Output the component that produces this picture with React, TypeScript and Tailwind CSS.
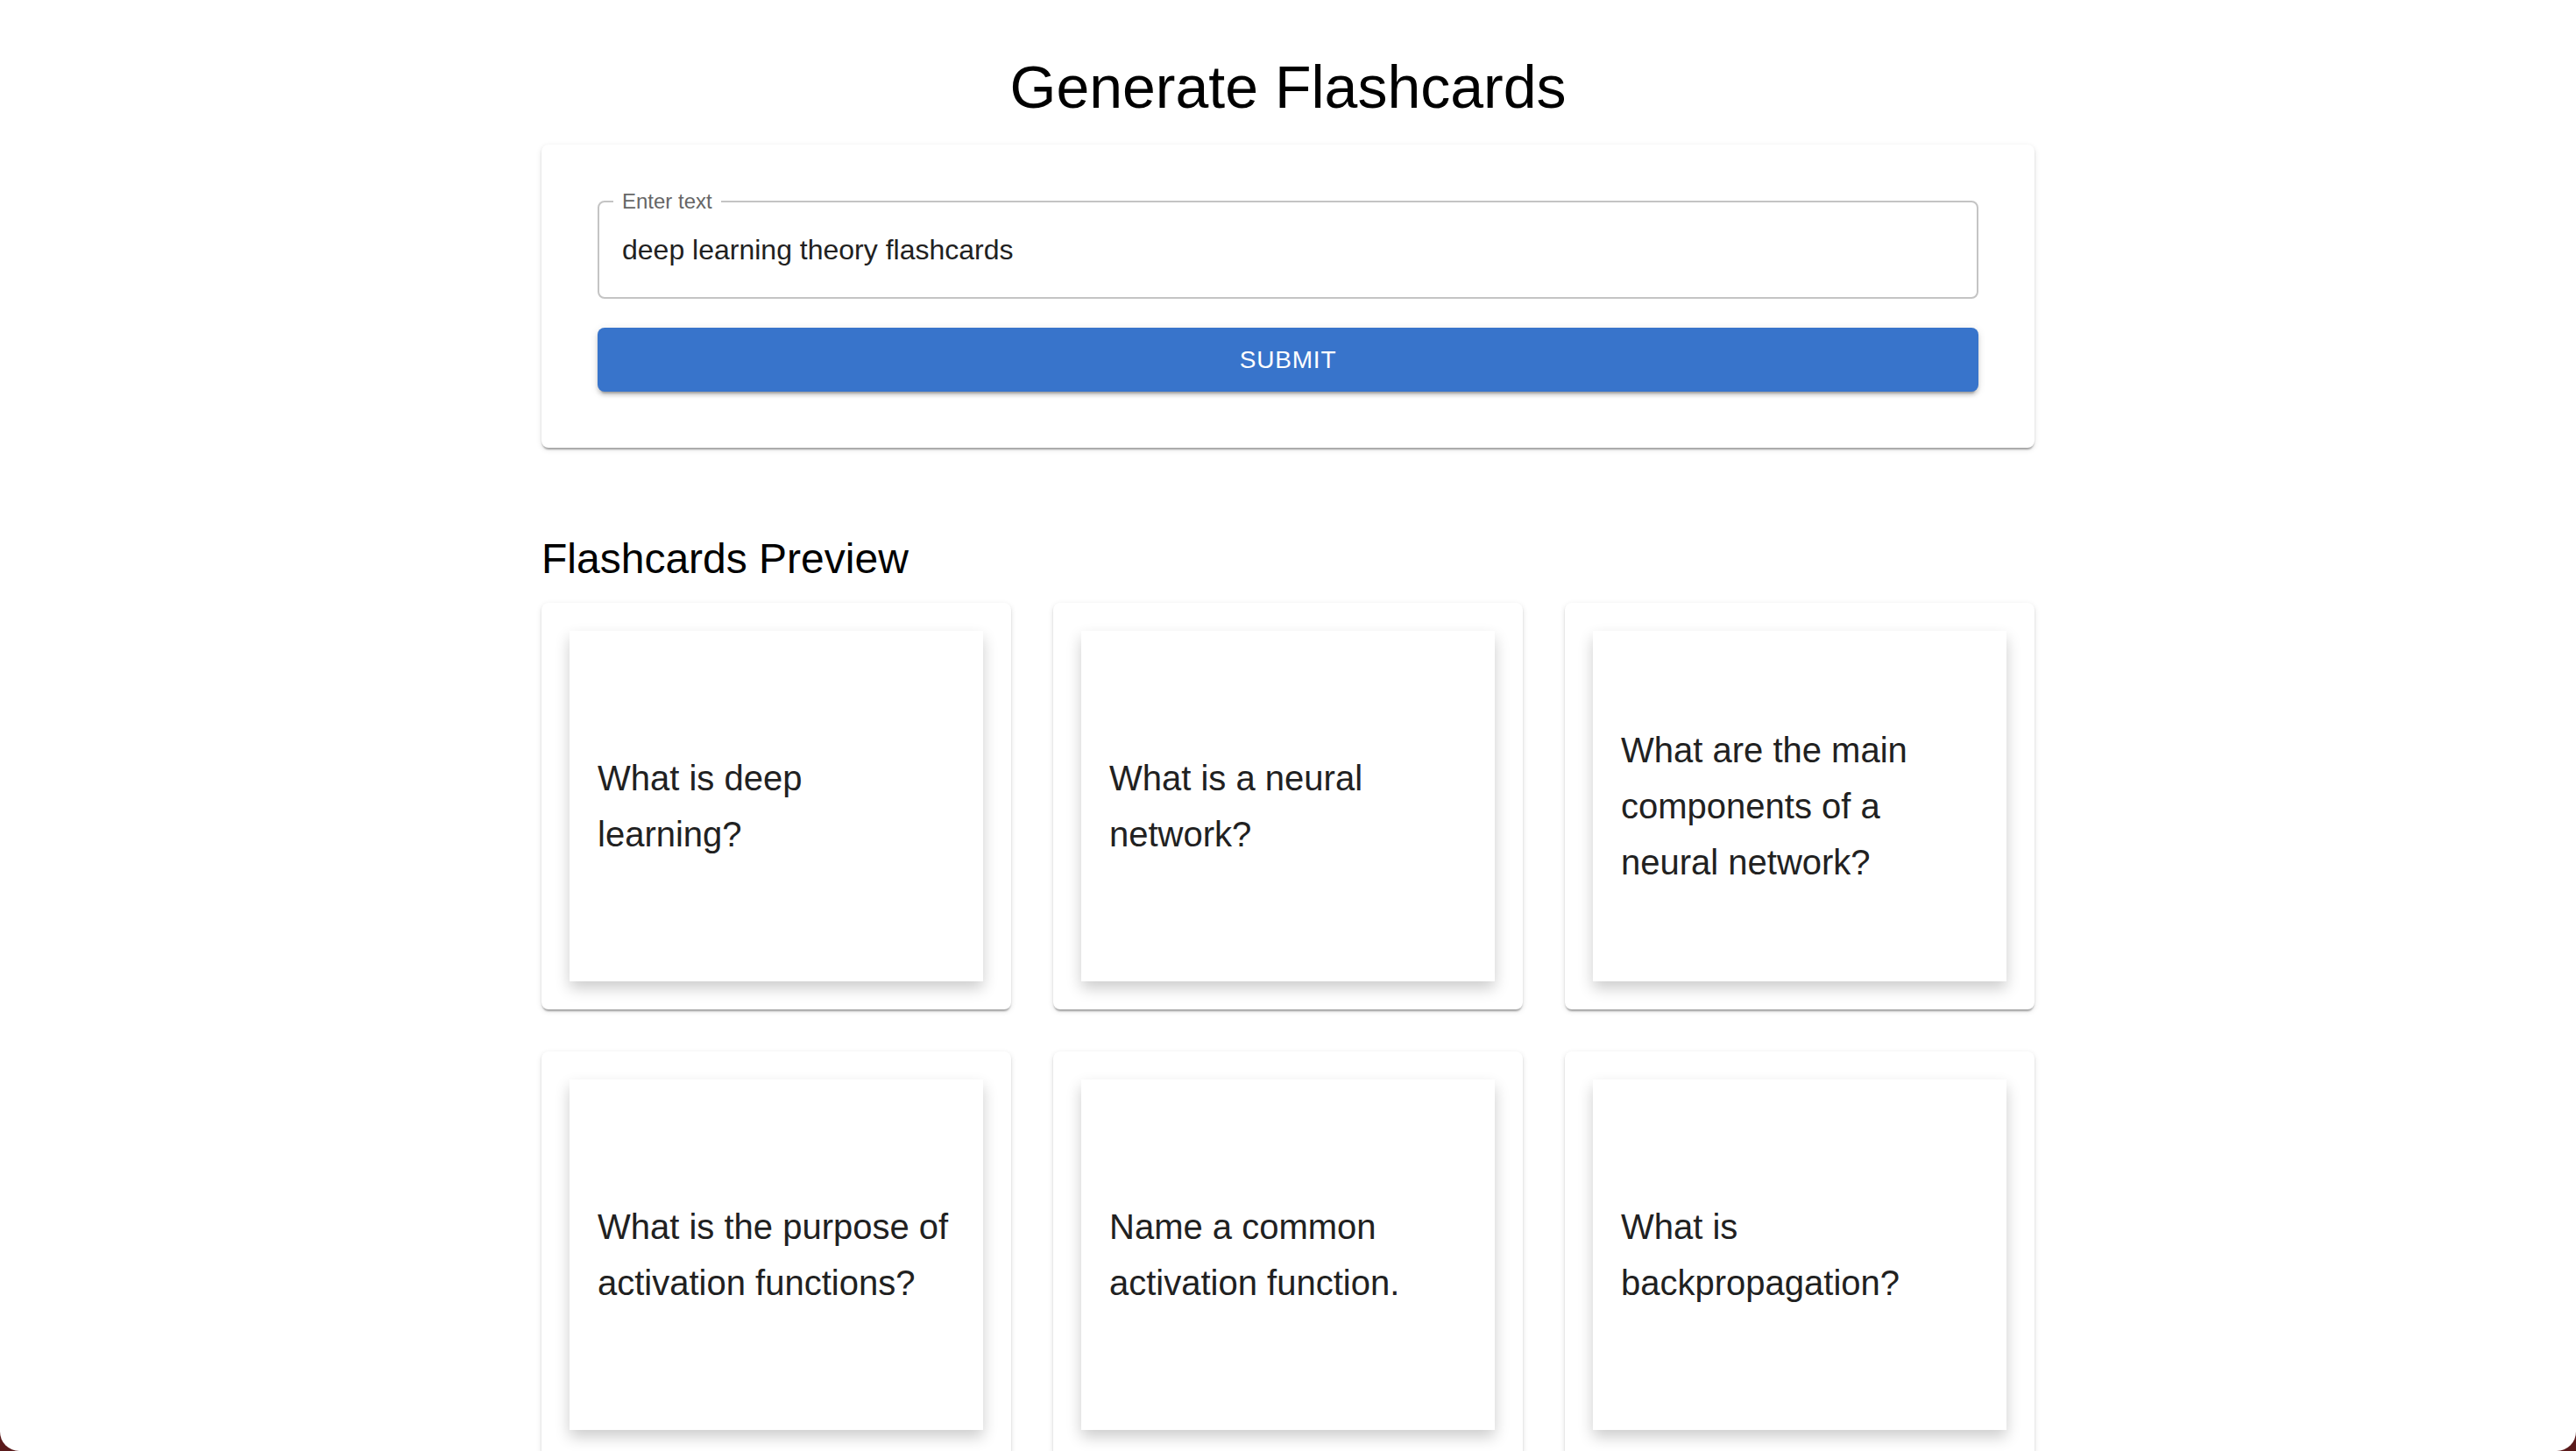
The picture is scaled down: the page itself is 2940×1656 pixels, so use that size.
import React from "react";

const cards = [
  "What is deep learning?",
  "What is a neural network?",
  "What are the main components of a neural network?",
  "What is the purpose of activation functions?",
  "Name a common activation function.",
  "What is backpropagation?",
];

export default function App() {
  return (
    <div className="h-screen w-full overflow-hidden bg-[#5a1a1b]">
      <div
        className="h-full w-full overflow-hidden rounded-b-[22px] bg-white pt-[57px]"
        style={{ fontFamily: "Helvetica, 'Liberation Sans', Arial, sans-serif" }}
      >
        <div className="mx-auto w-[1704px]">
          <h1 className="mb-[24px] text-center text-[68px] font-normal leading-[84px] text-black">
            Generate Flashcards
          </h1>

          <div className="rounded-[8px] bg-white p-[64px] shadow-[0_4px_2px_-2px_rgba(0,0,0,0.2),0_2px_2px_0_rgba(0,0,0,0.14),0_2px_6px_0_rgba(0,0,0,0.12)]">
            <div className="relative flex h-[112px] items-center rounded-[8px] border-2 border-[#c4c4c4] pl-[26px]">
              <span className="absolute left-[16px] top-[-13px] bg-white px-[10px] text-[24px] leading-[24px] text-[#666666]">
                Enter text
              </span>
              <span className="text-[32px] leading-[46px] text-[#212121]">
                deep learning theory flashcards
              </span>
            </div>
            <button
              type="button"
              className="mt-[33px] flex h-[73px] w-full items-center justify-center rounded-[8px] bg-[#3874cb] text-[28px] font-medium uppercase tracking-[0.8px] text-white shadow-[0_6px_2px_-4px_rgba(0,0,0,0.2),0_4px_4px_0_rgba(0,0,0,0.14),0_2px_10px_0_rgba(0,0,0,0.12)]"
            >
              Submit
            </button>
          </div>

          <h2 className="mb-[18px] mt-[95px] text-[48px] font-normal leading-[64px] text-black">
            Flashcards Preview
          </h2>

          <div className="grid grid-cols-3 gap-[48px]">
            {cards.map((q) => (
              <div
                key={q}
                className="rounded-[8px] bg-white p-[32px] shadow-[0_4px_2px_-2px_rgba(0,0,0,0.2),0_2px_2px_0_rgba(0,0,0,0.14),0_2px_6px_0_rgba(0,0,0,0.12)]"
              >
                <div className="flex h-[400px] flex-col justify-center bg-white px-[32px] shadow-[0_8px_16px_0_rgba(0,0,0,0.2)]">
                  <p className="text-[40px] leading-[64px] text-[#212121]">{q}</p>
                </div>
              </div>
            ))}
          </div>
        </div>
      </div>
    </div>
  );
}
